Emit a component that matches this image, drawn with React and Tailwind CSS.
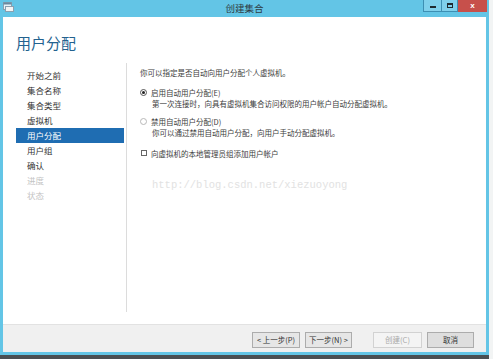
import React from "react";

const cjk = { fontFamily: '"Noto Sans CJK SC", "Noto Sans", sans-serif' };

function Nav() {
  const items = [
    ["开始之前", "n"],
    ["集合名称", "n"],
    ["集合类型", "n"],
    ["虚拟机", "n"],
    ["用户分配", "s"],
    ["用户组", "n"],
    ["确认", "n"],
    ["进度", "d"],
    ["状态", "d"],
  ];
  return (
    <div className="w-[123px] pl-[13px] pr-[2px] pt-[4.5px] flex flex-col">
      {items.map(([t, k]) => (
        <div
          key={t}
          className={
            "h-[15px] leading-[15px] pl-[11px] text-[8.5px] " +
            (k === "s"
              ? "bg-[#1f6db2] text-white"
              : k === "d"
              ? "text-[#c4c4c4]"
              : "text-[#333333]")
          }
        >
          {t}
        </div>
      ))}
    </div>
  );
}

function Btn({ children, kind }) {
  const cls =
    kind === "disabled"
      ? "bg-[#f4f4f4] border-[#d2d2d2] text-[#a8a8a8]"
      : kind === "cancel"
      ? "bg-[#dedede] border-[#acacac] text-[#333333]"
      : "bg-[#e6e6e6] border-[#acacac] text-[#333333]";
  return (
    <div
      className={
        "h-[16px] flex items-center justify-center border text-[7.5px] " + cls
      }
    >
      {children}
    </div>
  );
}

export default function App() {
  return (
    <div
      className="w-[493px] h-[359px] bg-[#f2f4f4] overflow-hidden flex flex-col"
      style={cjk}
    >
      <div className="w-[489px] h-[355px] bg-[#63c5e6] flex flex-col">
        {/* title bar */}
        <div className="h-[17px] grid grid-cols-[1fr_auto_1fr]">
          <div className="flex items-start pl-[3px] pt-[2px]">
            <svg width="11" height="10" viewBox="0 0 11 10">
              <rect x="0.5" y="0.5" width="8" height="7" fill="#e8f2f8" stroke="#8aa0b0" />
              <rect x="0.5" y="0.5" width="8" height="2" fill="#6a8aa0" />
              <rect x="2.5" y="4.5" width="8" height="5" fill="#f4f4f4" stroke="#8aa0b0" />
            </svg>
          </div>
          <div className="text-[9.5px] leading-[17px] text-[#2f3d44] pt-[0px]">
            创建集合
          </div>
          <div className="flex justify-end items-start pr-[2px]">
            <div className="w-[19px] h-[12px] bg-[#7fd0ec] border border-[#3d8fb3] border-t-0 flex items-end justify-center pb-[3px]">
              <div className="w-[6px] h-[2px] bg-[#1e2a30]" />
            </div>
            <div className="w-[16px] h-[12px] bg-[#7fd0ec] border-b border-r border-[#3d8fb3] flex items-center justify-center">
              <div className="w-[6px] h-[5px] border border-[#1e2a30] border-t-2" />
            </div>
            <div className="w-[29px] h-[12px] bg-[#c7504b] flex items-center justify-center text-white text-[8px] font-bold leading-none" style={{ fontFamily: '"Liberation Sans", sans-serif' }}>
              x
            </div>
          </div>
        </div>
        {/* body */}
        <div className="flex-1 mx-[3px] mb-[3px] bg-white flex flex-col">
          <div className="h-[46px] pl-[13px] pt-[17px]">
            <div className="text-[15px] leading-[18px] text-[#23628f]">用户分配</div>
          </div>
          <div className="flex-1 flex">
            <div className="w-[124px] flex">
              <Nav />
              <div className="mb-[12px] border-r border-[#dcdcdc]" />
            </div>
            <div className="flex-1 pl-[13px] pt-[3.5px] text-[7.5px] text-[#3c3c3c] flex flex-col">
              <div className="h-[11px] leading-[11px]">你可以指定是否自动向用户分配个人虚拟机。</div>
              <div className="mt-[9px] h-[11px] flex items-center">
                <div className="w-[7px] h-[7px] rounded-full border border-[#555] flex items-center justify-center">
                  <div className="w-[3px] h-[3px] rounded-full bg-[#222]" />
                </div>
                <div className="ml-[4px] leading-[11px]">启用自动用户分配(E)</div>
              </div>
              <div className="h-[11px] leading-[11px] pl-[12px]">
                第一次连接时，向具有虚拟机集合访问权限的用户帐户自动分配虚拟机。
              </div>
              <div className="mt-[7px] h-[11px] flex items-center">
                <div className="w-[7px] h-[7px] rounded-full border border-[#b8b8b8]" />
                <div className="ml-[4px] leading-[11px]">禁用自动用户分配(D)</div>
              </div>
              <div className="h-[11px] leading-[11px] pl-[12px]">
                你可以通过禁用自动用户分配，向用户手动分配虚拟机。
              </div>
              <div className="mt-[10px] h-[11px] flex items-center">
                <div className="ml-[1px] w-[6px] h-[6px] border border-[#666]" />
                <div className="ml-[4px] leading-[11px]">向虚拟机的本地管理员组添加用户帐户</div>
              </div>
              <div
                className="mt-[20px] ml-[12px] text-[10.5px] leading-[12px] text-[#e2e2e2]"
                style={{ fontFamily: '"Liberation Mono", monospace' }}
              >
                http://blog.csdn.net/xiezuoyong
              </div>
            </div>
          </div>
          <div className="h-[28px] border-t border-[#e2e2e2] bg-[#f0f0f0] flex pt-[7px] pl-[249px]">
            <div className="w-[48px]"><Btn>&lt; 上一步(P)</Btn></div>
            <div className="w-[47px] ml-[5px]"><Btn>下一步(N) &gt;</Btn></div>
            <div className="w-[49px] ml-[21px]"><Btn kind="disabled">创建(C)</Btn></div>
            <div className="w-[47px] ml-[5px]"><Btn kind="cancel">取消</Btn></div>
          </div>
        </div>
      </div>
      <div className="h-[4px] w-[489px] bg-[#4a4f52]" />
    </div>
  );
}
